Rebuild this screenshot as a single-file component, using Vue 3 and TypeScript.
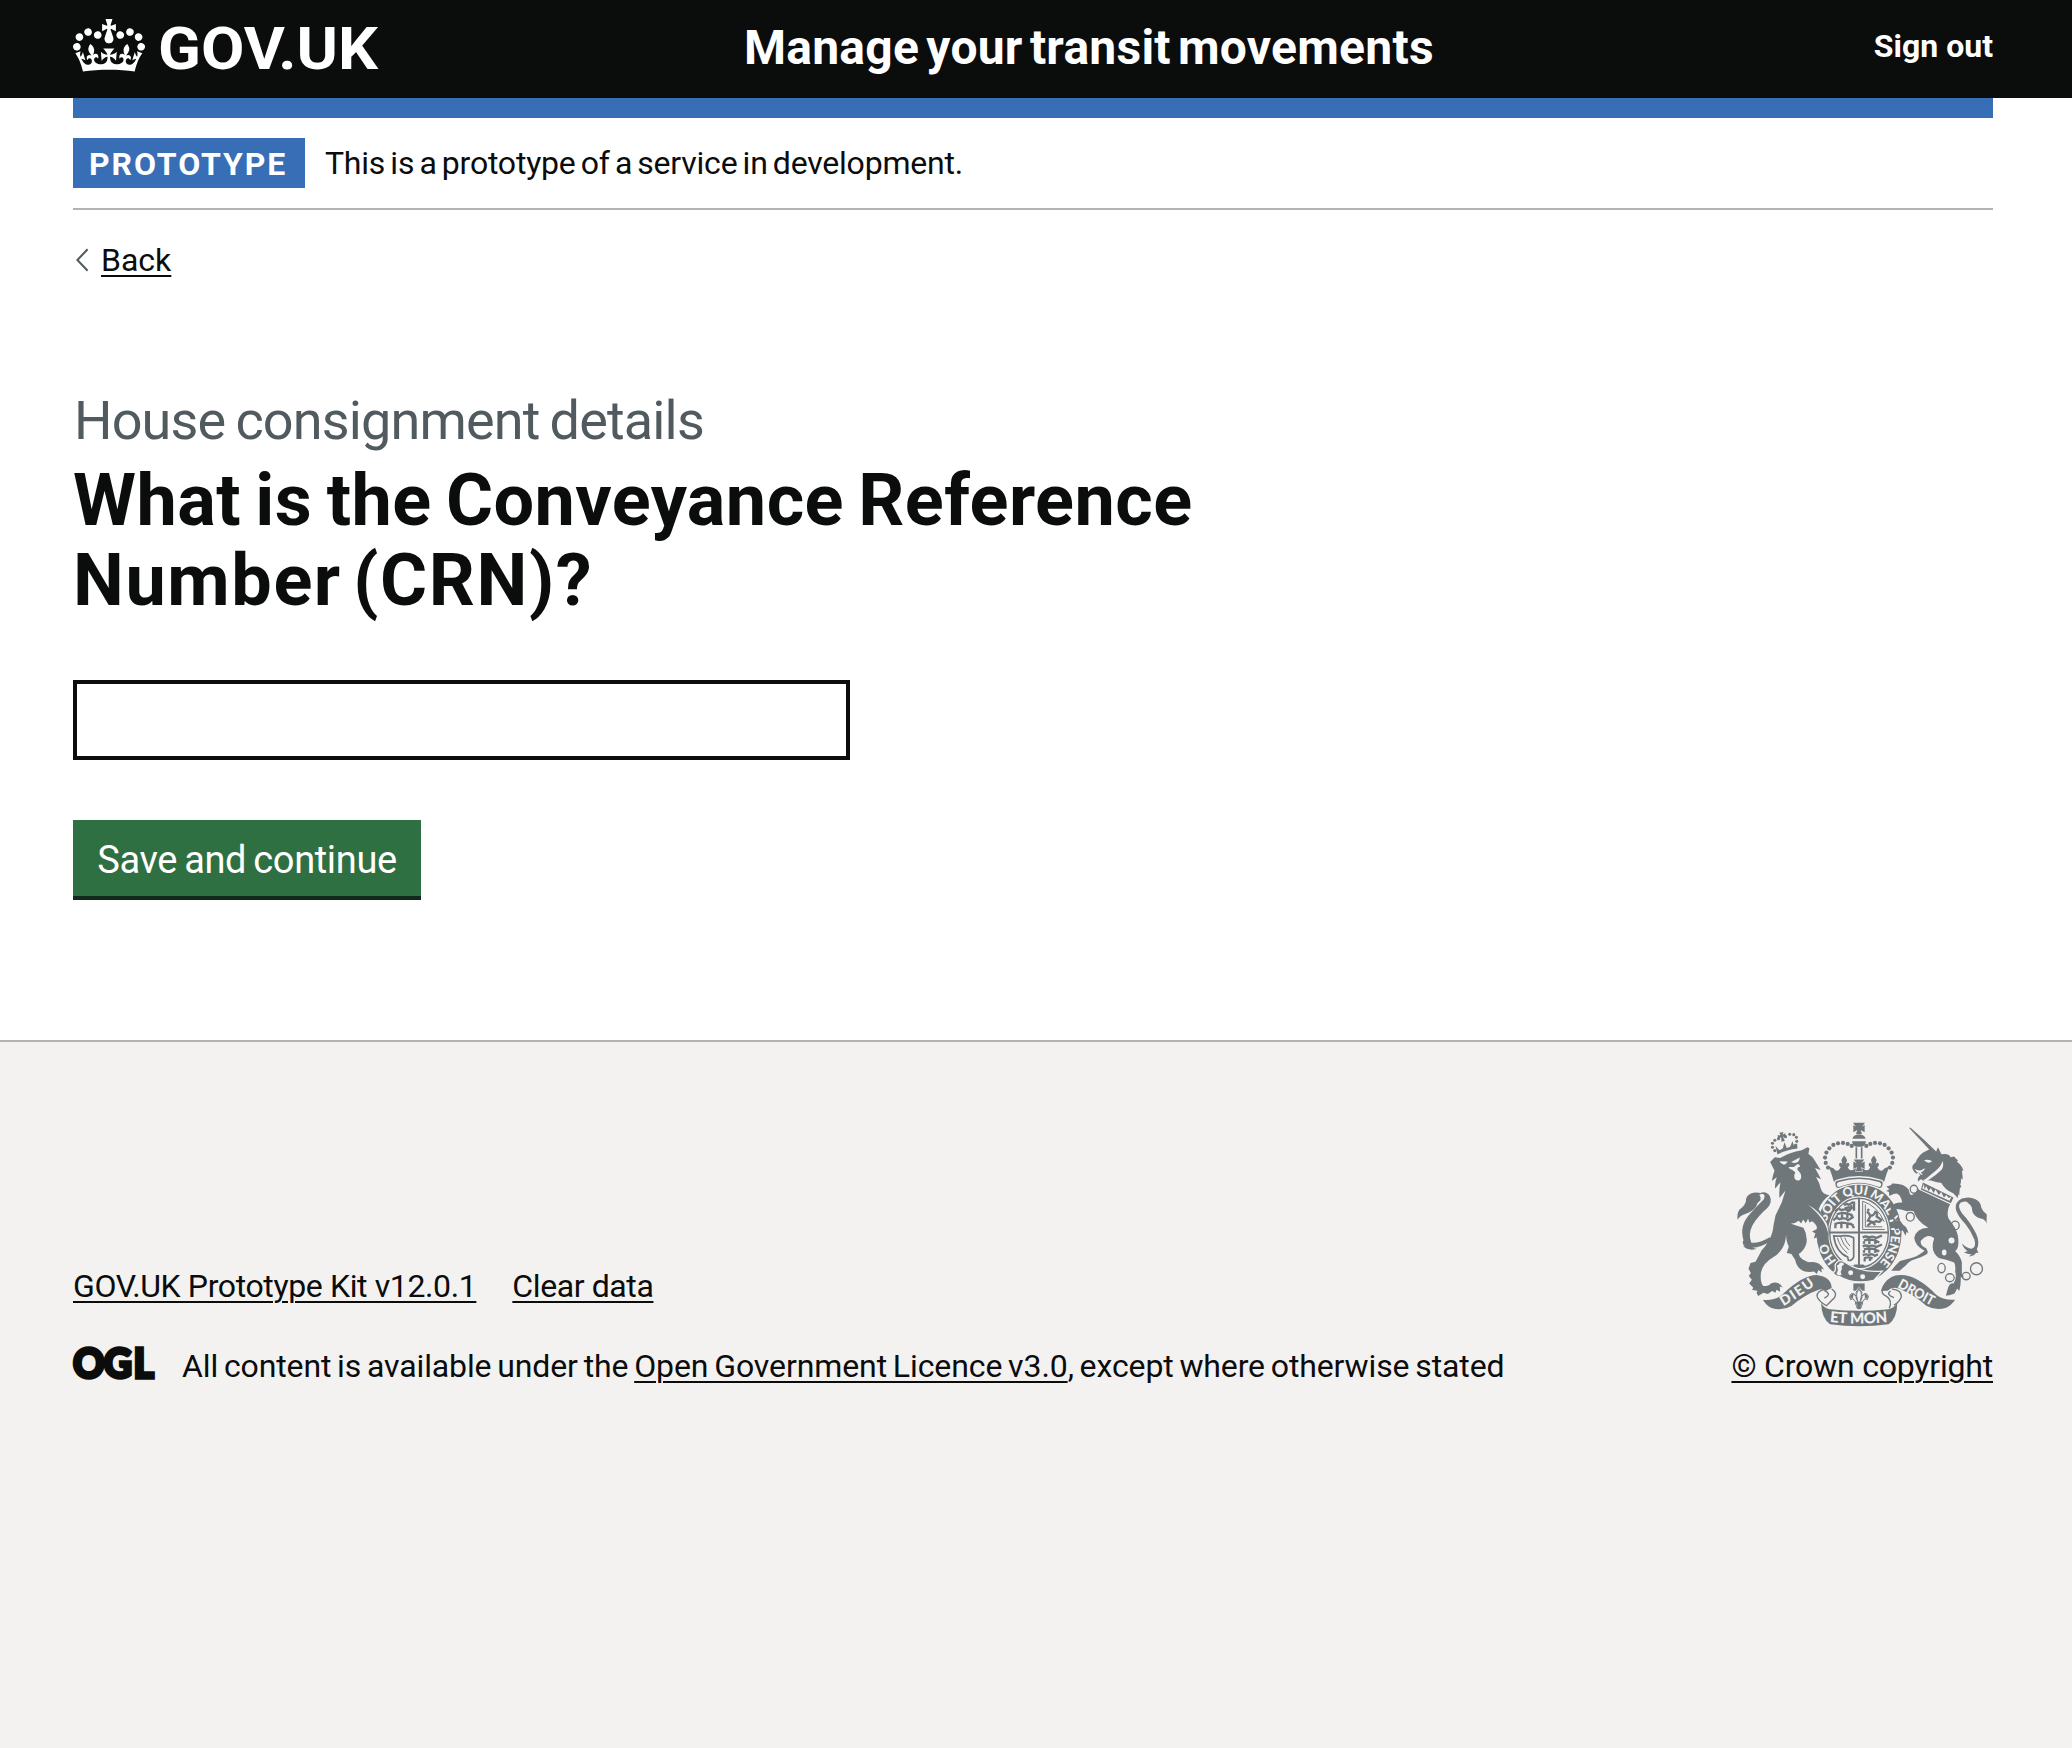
<script setup lang="ts">
interface Dot { x: number; y: number; r: number }

const crownDots: Dot[] = [
  [324, 201], [317, 187], [315, 171], [319, 156], [328, 143], [340, 133], [354, 128], [369, 127], [383, 130], [395, 136],
].flatMap(([x, y]) => [{ x, y, r: 6.3 }, { x: 834 - x, y, r: 6.3 }])

const lionCrownDots: Dot[] = [
  [164, 150], [157, 140], [157, 128], [164, 119], [175, 114], [196, 108], [209, 101], [221, 102], [229, 110], [230, 122], [226, 134],
].map(([x, y]) => ({ x, y, r: 4.6 }))

// cx, cy, rx, ry of the links in the unicorn's chain
const chainLinks = [
  [582, 266, 11, 12], [564, 290, 8, 10], [571, 349, 12, 13], [706, 375, 12, 13],
  [665, 503, 11, 14], [690, 532, 13, 12], [739, 527, 12, 11], [770, 505, 18, 18],
]
</script>

<template>
  <div class="page">
    <header class="header">
      <div class="container header-row">
        <a class="logo" aria-label="GOV.UK">
          <svg class="crown" viewBox="0 0 132 97" width="72" height="53" aria-hidden="true">
            <path fill="currentColor" fill-rule="evenodd" d="M25 30.2c3.5 1.5 7.7-.2 9.1-3.7 1.5-3.6-.2-7.8-3.9-9.2-3.6-1.4-7.6.3-9.1 3.9-1.4 3.5.3 7.5 3.9 9zM9 39.5c3.6 1.5 7.8-.2 9.2-3.7 1.5-3.6-.2-7.8-3.9-9.1-3.6-1.5-7.6.2-9.1 3.8-1.4 3.5.3 7.5 3.8 9zM4.4 57.2c3.5 1.5 7.7-.2 9.1-3.8 1.5-3.6-.2-7.7-3.9-9.1-3.5-1.5-7.6.3-9.1 3.8-1.4 3.5.3 7.6 3.9 9.1zm38.3-21.4c3.5 1.5 7.7-.2 9.1-3.8 1.5-3.6-.2-7.7-3.9-9.1-3.6-1.5-7.6.3-9.1 3.8-1.3 3.6.4 7.7 3.9 9.1zm64.4-5.6c-3.6 1.5-7.8-.2-9.1-3.7-1.5-3.6.2-7.8 3.8-9.2 3.6-1.4 7.7.3 9.2 3.9 1.3 3.5-.4 7.5-3.9 9zm15.9 9.3c-3.6 1.5-7.7-.2-9.1-3.7-1.5-3.6.2-7.8 3.7-9.1 3.6-1.5 7.7.2 9.2 3.8 1.5 3.5-.3 7.5-3.8 9zm4.7 17.7c-3.6 1.5-7.8-.2-9.2-3.8-1.5-3.6.2-7.7 3.9-9.1 3.6-1.5 7.7.3 9.2 3.8 1.3 3.5-.4 7.6-3.9 9.1zM89.3 35.8c-3.6 1.5-7.8-.2-9.2-3.8-1.4-3.6.2-7.7 3.9-9.1 3.6-1.5 7.7.3 9.2 3.8 1.4 3.6-.3 7.7-3.9 9.1zM69.7 17.7l8.9 4.7V9.3l-8.9 2.8c-.2-.3-.5-.6-.9-.9L72.4 0H59.6l3.5 11.2c-.3.3-.6.5-.9.9l-8.8-2.8v13.1l8.8-4.7c.3.3.6.7.9.9l-5 15.4v.1c-.2.8-.4 1.6-.4 2.4 0 4.1 3.1 7.5 7 8.1h.2c.3 0 .7.1 1 .1.4 0 .7 0 1-.1h.2c4-.6 7.1-4.1 7.1-8.1 0-.8-.1-1.7-.4-2.4V34l-5.1-15.4c.4-.2.7-.6 1-.9zM66 92.8c16.9 0 32.8 1.1 47.1 3.2 4-16.9 8.9-26.7 14-33.5l-9.6-3.4c1 4.9 1.1 7.2 0 10.2-1.5-1.4-3-4.3-4.2-8.7L108.6 76c2.8-2 5-3.2 7.5-3.3-4.4 9.4-10 11.9-13.6 11.2-4.3-.8-6.3-4.6-5.6-7.9 1-4.7 5.7-5.9 8-.5 4.3-8.7-3-11.4-7.6-8.8 7.1-7.2 7.9-13.5 2.1-21.1-8 6.1-8.1 12.3-4.5 20.8-4.7-5.4-12.1-2.5-9.5 6.2 3.4-5.2 7.9-2 7.2 3.1-.6 4.3-6.4 7.8-13.5 7.2-10.3-.9-10.9-8-11.2-13.8 2.5-.5 7.1 1.8 11 7.3L80.2 60c-4.1 4.4-8 5.3-12.3 5.4 1.4-4.4 8-11.6 8-11.6H55.5s6.4 7.2 7.9 11.6c-4.2-.1-8-1-12.3-5.4l1.4 16.4c3.9-5.5 8.5-7.7 10.9-7.3-.3 5.8-.9 12.8-11.1 13.8-7.2.6-12.9-2.9-13.5-7.2-.7-5 3.8-8.3 7.1-3.1 2.7-8.7-4.6-11.6-9.4-6.2 3.7-8.5 3.6-14.7-4.6-20.8-5.8 7.6-5 13.9 2.2 21.1-4.7-2.6-11.9.1-7.7 8.8 2.3-5.5 7.1-4.2 8.1.5.7 3.3-1.3 7.1-5.7 7.9-3.5.7-9-1.8-13.5-11.2 2.5.1 4.7 1.3 7.5 3.3l-4.7-15.4c-1.2 4.4-2.7 7.2-4.3 8.7-1.1-3-.9-5.3 0-10.2l-9.5 3.4c5 6.9 9.9 16.7 14 33.5 14.8-2.1 30.8-3.2 47.7-3.2z" />
          </svg>
          <svg class="wordmark" viewBox="0 0 224 53" width="224" height="53">
            <text x="0" y="50" textLength="220" lengthAdjust="spacingAndGlyphs">GOV.UK</text>
          </svg>
        </a>
        <span class="service">Manage your transit movements</span>
        <a class="signout">Sign out</a>
      </div>
    </header>

    <div class="container body">
      <div class="bar"></div>
      <div class="phase">
        <strong class="tag">PROTOTYPE</strong>
        <span class="phase-text">This is a prototype of a service in development.</span>
      </div>
      <a class="back">
        <svg viewBox="0 0 16 24" width="16" height="24" aria-hidden="true">
          <path d="M14.6 1.2 4.4 12 14.6 22.8" fill="none" stroke="#505a5f" stroke-width="2" />
        </svg>
        <span class="link">Back</span>
      </a>
      <main class="main">
        <span class="caption">House consignment details</span>
        <h1 class="heading">
          What is the Conveyance Reference<br /><span class="heading-end">Number (CRN)?</span>
        </h1>
        <input class="input" type="text" aria-label="Conveyance Reference Number" />
        <button class="button" type="button">Save and continue</button>
      </main>
    </div>

    <footer class="footer">
      <div class="container footer-row">
        <div class="footer-main">
          <div class="footer-links">
            <a class="link kit">GOV.UK Prototype Kit v12.0.1</a>
            <a class="link clear">Clear data</a>
          </div>
          <div class="licence">
            <svg class="ogl" viewBox="0 0 82 34" width="82" height="34" role="img">
              <text transform="scale(0.95 1)" y="31.6" x="0 32.4 63.6">OGL</text>
            </svg>
            <span class="licence-text">All content is available under the <a class="link licence-link">Open Government Licence v3.0</a>, except where otherwise stated</span>
          </div>
        </div>
        <div class="copyright">
          <svg class="arms" viewBox="48 64 756 616" width="252" height="205" aria-hidden="true">
            <defs>
              <path id="garter-main" d="M320 364A99 116 0 1 1 477 488" />
              <path id="garter-start" d="M350 481A99 116 0 0 1 318 404" />
              <path id="motto-left" d="M190 618Q246 584 292 548" />
              <path id="motto-right" d="M531 560Q585 590 636 617" />
              <path id="motto-mid" d="M329 665Q417 674 505 665" />
            </defs>

            <!-- garter and shield -->
            <ellipse class="g" cx="417" cy="397" rx="128" ry="148" />
            <ellipse class="l" cx="417" cy="397" rx="93" ry="110" />
            <ellipse class="s" cx="417" cy="397" rx="88" ry="104" stroke-width="4" />
            <path class="s" stroke-width="6" d="M417 293V500M329 396H505" />
            <path class="g" d="M404 492h26l10 8q-23 6-46 0z" />
            <g class="s" stroke-width="7">
              <path d="M346 333q8-12 18-4 14-6 20 3l10-9v-10M350 342q16-8 34-2 10 0 14 6M350 344v9M366 342v11M382 342v11M392 342l8 11" />
              <path d="M340 360q8-12 18-4 18-6 26 3l14-9M344 371q18-8 38-2 12 0 18 6M346 371v12M364 370v13M382 370v13M396 372l6 11" />
              <path d="M372 315q8-8 14-2l14-9M374 324q14-6 24 0M388 326v8M402 303v28" />
              <path d="M428 411q10-6 18 0 14-6 22 2l18-8M432 420q16-6 34 0l12 6M432 422v8M448 420v11M466 422v9" />
              <path d="M428 438q10-6 18 0 14-6 22 2l18-8M432 447q16-6 34 0l12 6M432 449v8M448 447v11M466 449v9" />
              <path d="M428 464q10-4 18 0 10-6 18 2l10-4M432 474q12-6 26 0M434 475v8M450 474v8" />
            </g>
            <path class="s" stroke-width="3" d="M428 302v85h66M436 312v67h51M428 302q44 14 65 62" />
            <path class="s" stroke-width="7" d="M440 334q8 2 10 12 12 0 16-12 8 2 4 14l14 10q-6 10-14 4l-12 4 8 8M452 346l-8 14 12 4-14 12M442 330l6-4" />
            <path class="s" stroke-width="5" d="M341 406q16 2 26 0 20-2 34 6v58q-6 12-16 10l-2-10q-36-16-42-64z" />
            <path class="s" stroke-width="3" d="M352 412q8 28 30 46M362 410q6 22 24 38M374 411q4 14 16 26" />
            <g class="motto ring">
              <text><textPath href="#garter-main" textLength="402">SOIT QUI MAL Y PENSE</textPath></text>
              <text><textPath href="#garter-start" textLength="62">HO</textPath></text>
            </g>
            <!-- buckle and strap -->
            <path class="o" d="M345 494q8-16 20-13l12 6q46 31 110 25l-26 28q-60 14-104-12-14-2-18-12 10-2 6-22z" />
            <path class="l" d="M350 495q7 0 9-8 12-3 13 5-10 4-6 14-7 8-1 17-9 5-16-4 8-9 1-24z" />
            <circle class="l" cx="392" cy="517" r="7.5" />
            <circle class="l" cx="428" cy="529" r="7.5" />

            <!-- royal crown -->
            <circle v-for="(d, i) in crownDots" :key="'c' + i" class="g" :cx="d.x" :cy="d.y" :r="d.r" />
            <path class="g" d="M399 66h36l-9 12 8-5v22l-12-7 4 12h-18l4-12-12 7V73l8 5zM397 114q4-12 20-13 16 1 20 13zM396 122h42q-2 14-12 16h-18q-10-2-12-16z" />
            <path class="s" stroke-width="5" d="M409 140v34M425 140v34" />
            <path id="crown-half" class="g" d="M326 198l14 5q12 16 22-2-8-8-3-14 8-3 9 7l-4-16q4-8 8-13 6 5 9 13l-4 16q2-10 9-7 5 6-3 14 8 15 24 2l-3-4h13v41q-38-1-74 9-6-23-17-51z" />
            <use href="#crown-half" transform="matrix(-1 0 0 1 834 0)" />
            <path class="o cross" d="M401 177h32l-9 11 10-5v22l-12-6 5 13h-20l5-13-12 6v-22l10 5z" />
            <path class="o" d="M354 238q63-19 126 0 12 3 10 12-1 16-13 14-60-27-120 0-12 2-13-14-2-9 10-12z" />
            <path class="l" d="M357 244q60-18 120 0 10 4 5 13-3 4-9 1-56-23-112 0-6 3-9-1-5-9 5-13z" />

            <!-- lion -->
            <circle v-for="(d, i) in lionCrownDots" :key="'l' + i" class="g" :cx="d.x" :cy="d.y" :r="d.r" />
            <path class="g" d="M178 96l12-2-3 8 8-4 3 11-9-1 5 13-10 2-1-13-8 5-3-11 9 0z" />
            <path class="g" d="M172 162Q200 147 232 144L231 128 222 137 217 122 210 138 200 142 193 125 188 144 178 149 166 136Z" />
            <path class="g" d="M150 184L164 170 180 172Q208 156 245 149L262 140 268 143 265 160Q279 168 284 180L302 209 285 202 303 236 288 229Q298 245 302 264 307 282 328 284 305 300 296 326L312 352Q328 375 326 395L324 422 317 411 312 428 304 413 296 426 292 410 281 414 286 399 276 393 292 385Q289 370 276 362L268 366 264 355 257 368 249 357 243 369 236 361Q222 371 212 369 225 374 250 382 263 404 259 428 255 446 236 461 238 472 248 477 262 486 274 485 298 483 312 507L304 504 305 516 295 509 290 521 282 513 268 515Q250 515 240 506 229 496 225 478L214 461 200 458 206 438Q198 424 198 403 196 430 186 444 176 460 160 470 126 490 122 520 120 545 129 557 145 558 152 549 176 540 188 561L179 558 180 574 169 568 166 577 156 572 143 581 130 577 114 587 109 577 112 571 96 569 99 561 87 549 95 538 86 527 92 518 85 505 91 488 106 484Q116 466 124 450 138 436 146 420 158 400 160 375L166 345 185 305 196 270 178 292Q176 268 181 245L165 264Q163 246 170 230L155 241Q158 225 163 210Z" />
            <path class="l" d="M178 182l25 1q-6 10-13 9-8-2-12-10zM213 184l26-13q-1 12-9 15-8 3-17-2zM205 199h16l12-9q8 2 7 8-7 1-9 8l10 12q6 14-2 20-10 5-16-5-3-10 3-17l-9-8q-8 0-12-9z" />
            <path class="l" d="M264 313q34 18 56 55 6 20 4 30-4-24-20-44-12-18-40-41z" />
            <path class="g" d="M119 278q18-9 30 8 8 18-6 35-30 26-46 53-14 28-4 52 20 4 56-16l5 11q-36 22-58 21l13 3q-24 8-41-9l6 1q-10-8-4-18-14-44 21-81 30-32 39-40 6-11 1-16-5-4-10-1z" />
            <path class="g" d="M125 279q-18-6-33 0-16 8-15 24-4 14-19 24-8 10-6 31 8-13 25-18 24-8 32-24 2-10 11-16 4-10-3-17z" />

            <!-- unicorn -->
            <path class="g" d="M567 81l5 0q42 36 77 72l5-13 11 21q22-4 27 9l11-2q4 6 12 12l-4 3q16 13 20 28l-5-2q2 16 3 28l-5-4q0 14-3 20l4 4-5 6-2 22q-12-18-22-14-20-2-31-24-18-2-32-7-14 0-22-4l5 10-8-3-4-8-10 8q-2-12 7-18l-5-8-8 2-6-6-4-8q-4-10 9-19 10-26 30-34l11-5z" />
            <path class="l" d="M612 179q12-4 25 3-8 7-16 3zM584 205q10 6 20 4 6-5 12-6-5 11-13 13l6 7q-6 1-10-4-8-2-15-14z" />
            <path class="l" d="M668 181q5 13-2 26-16 16-40 31-8 6-17 4 24-20 41-34 14-12 18-27z" />
            <path class="g" d="M602 264q46 25 90 44-14 24-6 46 24 30 28 52 6 36-8 46 16 16 20 33v36l7 10-10-1q0 28-5 42l-6-8-8 15q-12 6-26 7l5-19q6-22 18-18 11-16 5-35 2-18-3-28-32-10-46-13-28-20-14-60-20-16-40 8-4 14 16 22 9 16 0 19-16 10-36 15-18 6-24 17l-20 17h-25q10-14 26-29l34-9q18-4 40-22-30-16-31-39 6-28 42-30-34-20-44-50-12-2-20 0-24-8-38-6l-5 20 9 14 12-1 12 15q10 4 15 25l-6-5-3 12-9-17-7 5-5-10-11 4-3-13-8-3 7-13-10-17 2-24q12-14 34-12-5-24-17-27l-9 1-13 6-1-12-8-3 9-5-9-9q13 0 18-8 36-1 49 18l5 18q14-3 23-20z" />
            <path class="l" d="M606 238l100 48-12 27-98-46z" />
            <path class="g" d="M609 246l92 45-8 17-90-41zM612 250l-5 14 82 37 6-13-9 4-6-9-8 8-8-17-7 9-10-16-6 10-8-15-7 9-7-15-5 10z" fill-rule="evenodd" />
            <path class="g" d="M660 230h60l-6 62-14-14q-24-8-40-40z" />
            <circle class="l" cx="695" cy="420" r="9" />
            <ellipse class="l" cx="673" cy="456" rx="7" ry="9" />
            <ellipse v-for="(e, i) in chainLinks" :key="'r' + i" class="s" :cx="e[0]" :cy="e[1]" :rx="e[2]" :ry="e[3]" stroke-width="4" />
            <path class="g" d="M750 302q-8-14-24-8-21 10-18 32 4 18 28 44 18 22 28 48 6 22-8 27-8 0-18-6l-12-10q6 16 17 23-6 4-13 2 12 9 26 7l-9 7q18-2 22-11l7 1-5-12q10-20-2-46-18-36-42-61-16-22-5-32 12-6 22-3z" />
            <path class="g" d="M733 293q16-5 34 3 16 8 17 24 5 14 17 22l-1 28q-2-14-18-16-22-6-25-24 0-14-10-20-8-6-14-17z" />

            <!-- motto ribbons -->
            <path class="g" d="M128 598q38 4 62-19 58-54 100-55 44 6 45 39l-18 9q-10-9-23-3-40 14-80 48-28 16-60 6-14-6-26-25z" />
            <path class="g" d="M706 598q-34 3-58-16-56-57-104-58-30-2-50 24-8 10-11 24l20-1q16-16 40-4 40 16 76 49 28 16 60 6 14-6 27-24z" />
            <path class="g" d="M303 606q6 17 26 21 88 9 176 0 20-4 27-21 0 48-26 66-88 12-176 0-26-18-27-66z" />
            <path class="s" stroke-width="4" d="M318 566q-28 4-27 22 4 14 28 28 12-12 24-24 10-14-8-26M313 571q24 10 0 22M516 566q30 2 28 24-6 16-22 24M488 568q-6 12 12 20 18 12 8 36M512 572q-16 10 10 20" />
            <path class="g" d="M400 549h34v22h-34z" />
            <path class="o" d="M417 563q13 12 8 25 7-12 15-8 10 7 2 18l-8-4q0 6-6 9 0 12-4 14 2 12-7 12t-7-12q-4-2-4-14-6-3-6-9l-8 4q-8-11 2-18 8-4 15 8-5-13 8-25z" />
            <path class="s" stroke-width="3" d="M417 563q13 12 8 25 7-12 15-8 10 7 2 18l-8-4q0 6-6 9 0 12-4 14 2 8-7 8t-7-8q-4-2-4-14-6-3-6-9l-8 4q-8-11 2-18 8-4 15 8-5-13 8-25z" />
            <path class="l" d="M417 569q8 9 5 21l-3 13h-4l-3-13q-3-12 5-21zM400 584q6 0 8 12l5 10-8-6-6-8zM434 584q-6 0-8 12l-5 10 8-6 6-8z" />
            <g class="motto">
              <text><textPath href="#motto-left" textLength="114">DIEU</textPath></text>
              <text><textPath href="#motto-right" textLength="118" lengthAdjust="spacingAndGlyphs">DROIT</textPath></text>
              <text class="mid"><textPath href="#motto-mid" textLength="174">ET MON</textPath></text>
            </g>
          </svg>
          <a class="link copy-link">© Crown copyright</a>
        </div>
      </div>
    </footer>
  </div>
</template>

<style>
html,
body {
  margin: 0;
  background: #fff;
}
</style>

<style scoped>
.page {
  display: flex;
  flex-direction: column;
  min-height: 1748px;
  color: #0b0c0c;
  font-family: Roboto, 'Liberation Sans', sans-serif;
  font-size: 32px;
  line-height: 40px;
}
.container {
  width: 1920px;
  margin-left: 73px;
}
.header {
  height: 98px;
  background: #0b0c0c;
  color: #fff;
}
.header-row {
  display: flex;
  align-items: flex-start;
}
.logo {
  display: flex;
  gap: 13px;
  width: 671px;
  padding-top: 19px;
}
.wordmark {
  overflow: visible;
}
.wordmark text {
  font-size: 59px;
  font-weight: 700;
  fill: #fff;
}
.service {
  flex: 1;
  margin-top: 18px;
  font-size: 48px;
  font-weight: 700;
  line-height: 60px;
  letter-spacing: 0.25px;
  word-spacing: -5px;
}
.signout {
  margin-top: 26px;
  font-weight: 700;
}
.bar {
  height: 20px;
  background: #386eb5;
}
.phase {
  display: flex;
  align-items: center;
  gap: 20px;
  height: 50px;
  padding: 20px 0;
  border-bottom: 2px solid #b1b4b6;
}
.tag {
  box-sizing: border-box;
  width: 232px;
  height: 50px;
  padding: 6px 0 4px 16px;
  background: #386eb5;
  color: #fff;
  letter-spacing: 1.9px;
}
.phase-text {
  letter-spacing: -0.22px;
  word-spacing: -2.5px;
}
.link {
  text-decoration: underline;
  text-decoration-thickness: 2px;
  text-underline-offset: 4px;
}
.back {
  display: flex;
  align-items: center;
  gap: 12px;
  width: fit-content;
  margin-top: 30px;
}
.main {
  display: flex;
  flex-direction: column;
  align-items: flex-start;
  padding-top: 111px;
}
.caption {
  padding-left: 1px;
  color: #505a5f;
  font-size: 54px;
  line-height: 60px;
  letter-spacing: -0.85px;
  word-spacing: -2.5px;
}
.heading {
  margin: 10px 0 0;
  font-size: 72px;
  font-weight: 700;
  line-height: 80px;
  letter-spacing: 0.45px;
  word-spacing: -4px;
  white-space: nowrap;
}
.heading-end {
  letter-spacing: 1.6px;
  word-spacing: -8px;
}
.input {
  box-sizing: border-box;
  width: 777px;
  height: 80px;
  margin: 59px 0 0;
  border: 4px solid #0b0c0c;
  border-radius: 0;
  background: #fff;
}
.button {
  box-sizing: border-box;
  width: 348px;
  height: 80px;
  margin: 60px 0 0;
  padding: 3px 0 0;
  border: 0;
  border-bottom: 4px solid #0f2a1b;
  border-radius: 0;
  background: #2f7042;
  color: #fff;
  font: 400 38px/40px Roboto, 'Liberation Sans', sans-serif;
  letter-spacing: -0.35px;
  word-spacing: -2px;
}
.footer {
  flex: 1;
  margin-top: 140px;
  border-top: 2px solid #b1b4b6;
  background: #f3f2f1;
}
.footer-row {
  display: flex;
  justify-content: space-between;
  align-items: flex-end;
  padding-top: 80px;
}
.footer-links {
  display: flex;
  gap: 36px;
  margin-bottom: 40px;
}
.kit {
  letter-spacing: -0.38px;
}
.clear {
  letter-spacing: -0.4px;
}
.licence {
  display: flex;
}
.ogl {
  margin-right: 27px;
  overflow: visible;
}
.ogl text {
  font-family: Lato, Roboto, sans-serif;
  font-size: 41px;
  font-weight: 900;
  fill: #0b0c0c;
  stroke: #0b0c0c;
  stroke-width: 3.4px;
}
.licence-text {
  letter-spacing: -0.12px;
  word-spacing: -2px;
}
.licence-link {
  letter-spacing: -0.1px;
}
.copyright {
  display: flex;
  flex-direction: column;
  align-items: flex-end;
}
.arms {
  margin: 0 5px 19px 0;
}
.copy-link {
  letter-spacing: -0.2px;
}
.g {
  fill: #70777b;
}
.l {
  fill: #f3f2f1;
}
.s {
  fill: none;
  stroke: #70777b;
}
.o {
  fill: #70777b;
  stroke: #f3f2f1;
  stroke-width: 4px;
}
.cross {
  stroke-width: 3px;
  paint-order: stroke;
}
.motto text {
  font-family: Lato, Roboto, sans-serif;
  font-size: 42px;
  font-weight: 900;
  fill: #f3f2f1;
}
.motto .mid {
  font-size: 45px;
}
.ring text {
  font-size: 38px;
}
</style>
